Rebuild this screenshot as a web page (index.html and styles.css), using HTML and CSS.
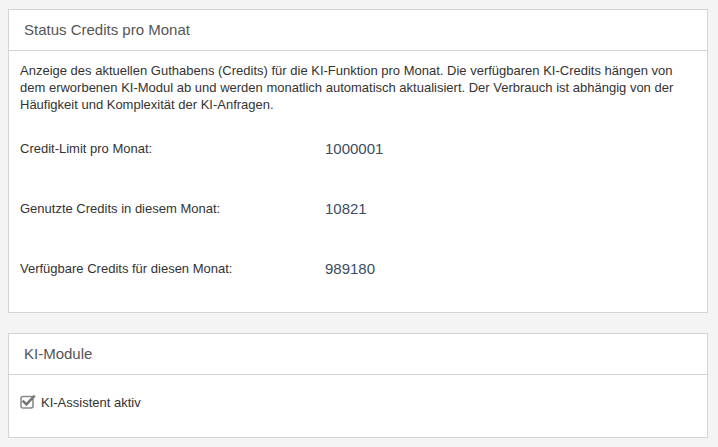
FILE: index.html
```html
<!DOCTYPE html>
<html lang="de">
<head>
<meta charset="utf-8">
<title>KI-Credits</title>
<link rel="stylesheet" href="styles.css">
</head>
<body>
<section class="panel">
  <header class="panel-head">Status Credits pro Monat</header>
  <div class="panel-body credits">
    <p class="desc">Anzeige des aktuellen Guthabens (Credits) für die KI-Funktion pro Monat. Die verfügbaren KI-Credits hängen von dem erworbenen KI-Modul ab und werden monatlich automatisch aktualisiert. Der Verbrauch ist abhängig von der Häufigkeit und Komplexität der KI-Anfragen.</p>
    <div class="row"><span class="label">Credit-Limit pro Monat:</span><span class="value">1000001</span></div>
    <div class="row"><span class="label">Genutzte Credits in diesem Monat:</span><span class="value">10821</span></div>
    <div class="row"><span class="label">Verfügbare Credits für diesen Monat:</span><span class="value">989180</span></div>
  </div>
</section>
<section class="panel">
  <header class="panel-head">KI-Module</header>
  <div class="panel-body modules">
    <label class="check">
      <svg class="check-icon" width="16" height="15" viewBox="0 0 16 15">
        <rect x="1" y="2.5" width="12" height="11.5" rx="2" fill="none" stroke="#8a8a8a" stroke-width="1.6"/>
        <path d="M3.6 7.6 L6.4 10.4 L13.8 2.6" fill="none" stroke="#777" stroke-width="2.6" stroke-linecap="square"/>
      </svg>
      <span>KI-Assistent aktiv</span>
    </label>
  </div>
</section>
</body>
</html>
```

FILE: styles.css
```css
html { background: #f4f4f4; }
body {
  margin: 9px 10px 0 8px;
  font-family: "Liberation Sans", Arial, sans-serif;
  color: #333;
}
.panel {
  width: 698px;
  background: #fff;
  border: 1px solid #d4d4d4;
  margin-bottom: 20px;
}
.panel-head {
  height: 40px;
  line-height: 40px;
  padding-left: 15px;
  font-size: 15px;
  color: #555;
  border-bottom: 1px solid #d4d4d4;
}
.panel-body { font-size: 13px; }
.credits { padding: 11px 11px 14px; }
.desc {
  margin: 0 0 5px;
  line-height: 17px;
  color: #333;
}
.row {
  display: flex;
  align-items: center;
  height: 60px;
}
.label { width: 305px; color: #333; }
.value { font-size: 15px; color: #3a4d63; }
.modules { padding: 18px 11px 26px; }
.check {
  display: flex;
  align-items: center;
  gap: 5px;
  height: 18px;
}
.check-icon { display: block; margin-top: -2px; }
```
